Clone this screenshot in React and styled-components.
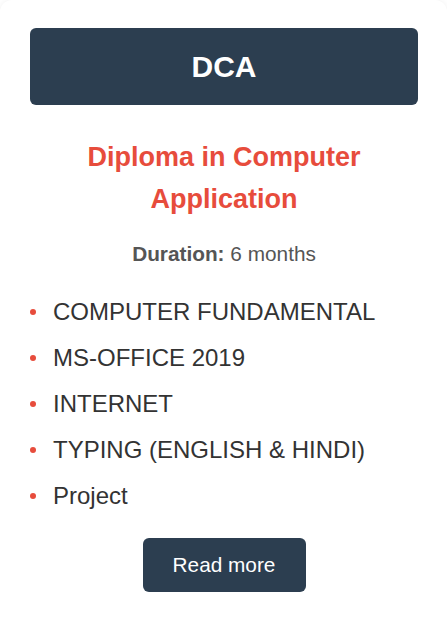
import React from "react";
import styled, { createGlobalStyle } from "styled-components";

const Global = createGlobalStyle`
  html, body { margin: 0; padding: 0; background: #ffffff; }
  body { font-family: "Liberation Sans", Arial, sans-serif; }
`;

const Card = styled.div`
  box-sizing: border-box;
  width: 447px;
  height: 618px;
  background: #ffffff;
  border-radius: 12px 12px 0 0;
  box-shadow: 0 0 6px rgba(0, 0, 0, 0.06);
  padding: 28px 29px 0 30px;
  display: flex;
  flex-direction: column;
  align-items: stretch;
`;

const Header = styled.div`
  background: #2c3e50;
  color: #ffffff;
  border-radius: 6px;
  height: 77px;
  display: flex;
  align-items: center;
  justify-content: center;
  font-size: 30px;
  font-weight: 700;
`;

const Title = styled.h2`
  margin: 31px 0 0;
  color: #e74c3c;
  font-size: 27px;
  line-height: 42px;
  font-weight: 700;
  text-align: center;
  padding: 0 40px;
`;

const Duration = styled.p`
  margin: 17px 0 0;
  color: #555555;
  font-size: 20.8px;
  line-height: 33px;
  text-align: center;
  strong { font-weight: 700; }
`;

const List = styled.ul`
  list-style: none;
  margin: 23px 0 0;
  padding: 0;
`;

const Item = styled.li`
  position: relative;
  padding-left: 23px;
  color: #333333;
  font-size: 24px;
  line-height: 38px;
  margin-bottom: 8px;
  &::before {
    content: "";
    position: absolute;
    left: 0;
    top: 16px;
    width: 6px;
    height: 6px;
    border-radius: 50%;
    background: #e74c3c;
  }
`;

const ButtonRow = styled.div`
  display: flex;
  justify-content: center;
  margin-top: 15px;
`;

const ReadMore = styled.button`
  background: #2c3e50;
  color: #ffffff;
  border: none;
  border-radius: 6px;
  width: 163px;
  height: 54px;
  font-family: "Liberation Sans", Arial, sans-serif;
  font-size: 20.8px;
  cursor: pointer;
`;

const items = [
  "COMPUTER FUNDAMENTAL",
  "MS-OFFICE 2019",
  "INTERNET",
  "TYPING (ENGLISH & HINDI)",
  "Project",
];

export default function App() {
  return (
    <>
      <Global />
      <Card>
        <Header>DCA</Header>
        <Title>Diploma in Computer Application</Title>
        <Duration>
          <strong>Duration:</strong> 6 months
        </Duration>
        <List>
          {items.map((t) => (
            <Item key={t}>{t}</Item>
          ))}
        </List>
        <ButtonRow>
          <ReadMore>Read more</ReadMore>
        </ButtonRow>
      </Card>
    </>
  );
}
